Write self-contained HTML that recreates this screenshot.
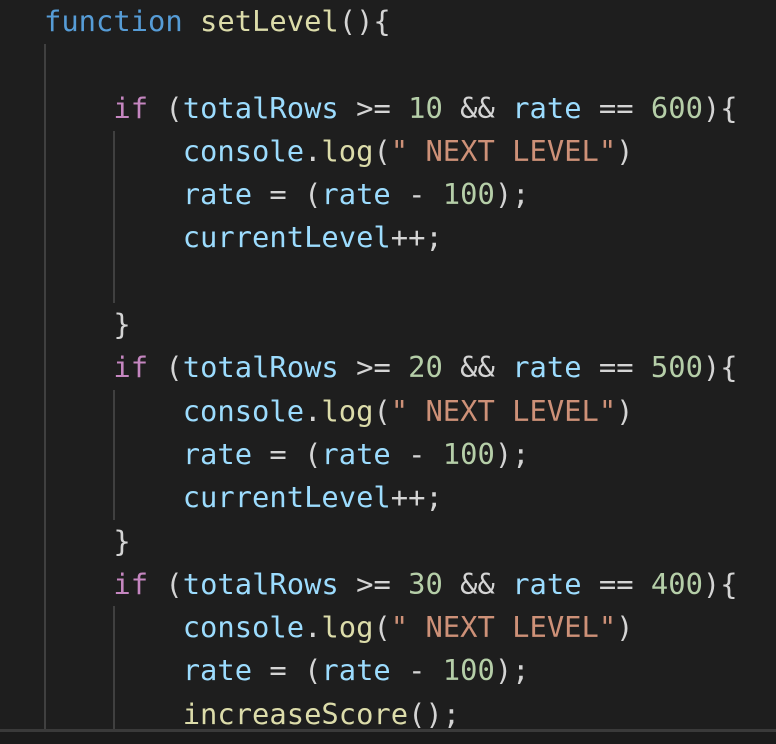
<!DOCTYPE html>
<html><head><style>
html,body{margin:0;padding:0;background:#1e1e1e;width:776px;height:744px;overflow:hidden}
.code{position:absolute;left:44px;top:0;font-family:"DejaVu Sans Mono","Liberation Mono",monospace;font-size:28.8px;line-height:43.3px;color:#d4d4d4;white-space:pre}
.k{color:#569cd6}.f{color:#dcdcaa}.c{color:#c586c0}.v{color:#9cdcfe}.n{color:#b5cea8}.s{color:#ce9178}
.g{position:absolute;width:2px;background:#404040}
.bot{position:absolute;left:0;top:729px;width:776px;height:3px;background:#3a3a3a}
.bot2{position:absolute;left:0;top:732px;width:776px;height:12px;background:#1b1b1b}
</style></head><body>
<div class="g" style="left:44px;top:44px;height:685px"></div>
<div class="g" style="left:113px;top:131px;height:172px"></div>
<div class="g" style="left:113px;top:390px;height:130px"></div>
<div class="g" style="left:113px;top:606px;height:123px"></div>
<div class="code"><span class="k">function</span> <span class="f">setLevel</span>(){

    <span class="c">if</span> (<span class="v">totalRows</span> &gt;= <span class="n">10</span> &amp;&amp; <span class="v">rate</span> == <span class="n">600</span>){
        <span class="v">console</span>.<span class="f">log</span>(<span class="s">" NEXT LEVEL"</span>)
        <span class="v">rate</span> = (<span class="v">rate</span> - <span class="n">100</span>);
        <span class="v">currentLevel</span>++;

    }
    <span class="c">if</span> (<span class="v">totalRows</span> &gt;= <span class="n">20</span> &amp;&amp; <span class="v">rate</span> == <span class="n">500</span>){
        <span class="v">console</span>.<span class="f">log</span>(<span class="s">" NEXT LEVEL"</span>)
        <span class="v">rate</span> = (<span class="v">rate</span> - <span class="n">100</span>);
        <span class="v">currentLevel</span>++;
    }
    <span class="c">if</span> (<span class="v">totalRows</span> &gt;= <span class="n">30</span> &amp;&amp; <span class="v">rate</span> == <span class="n">400</span>){
        <span class="v">console</span>.<span class="f">log</span>(<span class="s">" NEXT LEVEL"</span>)
        <span class="v">rate</span> = (<span class="v">rate</span> - <span class="n">100</span>);
        <span class="f">increaseScore</span>();</div>
<div class="bot"></div><div class="bot2"></div>
</body></html>
